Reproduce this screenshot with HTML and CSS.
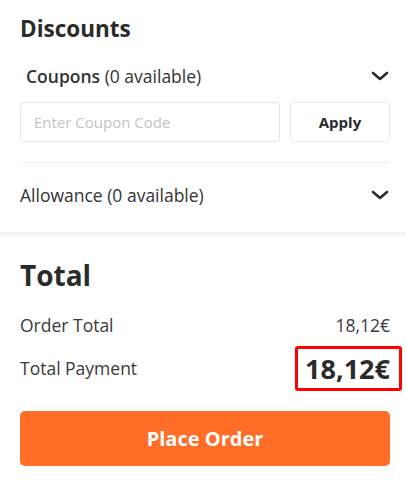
FILE: index.html
```html
<!DOCTYPE html>
<html lang="en">
<head>
<meta charset="utf-8">
<title>Checkout</title>
<link rel="stylesheet" href="styles.css">
</head>
<body>
<section class="discounts">
  <h2 class="title">Discounts</h2>
  <div class="row coupons">
    <span class="label"><b>Coupons</b> (0 available)</span>
    <svg class="chev" viewBox="0 0 18 10" width="18" height="10"><path d="M2 2 L9 8 L16 2" fill="none" stroke="#2b2b2b" stroke-width="2.6" stroke-linecap="round" stroke-linejoin="round"/></svg>
  </div>
  <div class="coupon-form">
    <input class="coupon-input" type="text" placeholder="Enter Coupon Code">
    <button class="apply">Apply</button>
  </div>
  <div class="row allowance">
    <span class="label">Allowance (0 available)</span>
    <svg class="chev" viewBox="0 0 18 10" width="18" height="10"><path d="M2 2 L9 8 L16 2" fill="none" stroke="#2b2b2b" stroke-width="2.6" stroke-linecap="round" stroke-linejoin="round"/></svg>
  </div>
</section>
<section class="total">
  <h2 class="title big">Total</h2>
  <div class="line">
    <span>Order Total</span>
    <span>18,12€</span>
  </div>
  <div class="line pay">
    <span>Total Payment</span>
    <span class="price">18,12€<span class="highlight"></span></span>
  </div>
  <button class="place">Place Order</button>
</section>
</body>
</html>
```
FILE: styles.css
```css
* { box-sizing: border-box; }
html, body { margin: 0; background: #fff; }
body {
  font-family: "Open Sans", "Liberation Sans", sans-serif;
  color: #333;
  width: 406px;
}
.discounts { padding: 14px 16px 0 20px; border-bottom: 3px solid #f4f4f4; }
.title { margin: 0; font-size: 22.5px; line-height: 30px; font-weight: 700; color: #2b2b2b; }
.row {
  display: flex;
  align-items: center;
  justify-content: space-between;
  font-size: 17.5px;
  color: #333;
}
.row b { font-weight: 600; }
.coupons { height: 40px; margin-top: 12px; padding-left: 6px; }
.chev { display: block; margin-right: 1px; }
.coupon-form {
  display: flex;
  gap: 10px;
  margin-top: 6px;
  padding-bottom: 20px;
  border-bottom: 1px solid #efefef;
}
.coupon-input {
  flex: 1;
  height: 40px;
  border: 1px solid #e3e3e3;
  border-radius: 4px;
  padding: 0 13px;
  font: 15px "Open Sans", sans-serif;
  color: #333;
  outline: none;
}
.coupon-input::placeholder { color: #c4c4c4; }
.apply {
  width: 100px;
  height: 40px;
  border: 1px solid #e8e8e8;
  border-radius: 4px;
  background: #fff;
  font: 700 15px "Open Sans", sans-serif;
  color: #2b2b2b;
}
.allowance { height: 64px; margin-bottom: 5px; }
.total { padding: 22px 16px 0 20px; }
.big { font-size: 28px; line-height: 36px; }
.line {
  display: flex;
  justify-content: space-between;
  align-items: center;
  font-size: 17.5px;
  color: #3a3a3a;
  height: 40px;
  margin-top: 12px;
}
.pay { height: 46px; margin-top: 0; }
.price { position: relative; font-size: 27px; font-weight: 700; color: #2b2b2b; }
.highlight {
  position: absolute;
  left: -10px; right: -12px; top: -4px; bottom: -4px;
  border: 3px solid #f00;
  border-radius: 3px;
}
.place {
  display: block;
  width: 100%;
  height: 55px;
  margin-top: 20px;
  border: none;
  border-radius: 5px;
  background: #ff6d27;
  color: #fff;
  font: 700 20px "Open Sans", sans-serif;
}
```
